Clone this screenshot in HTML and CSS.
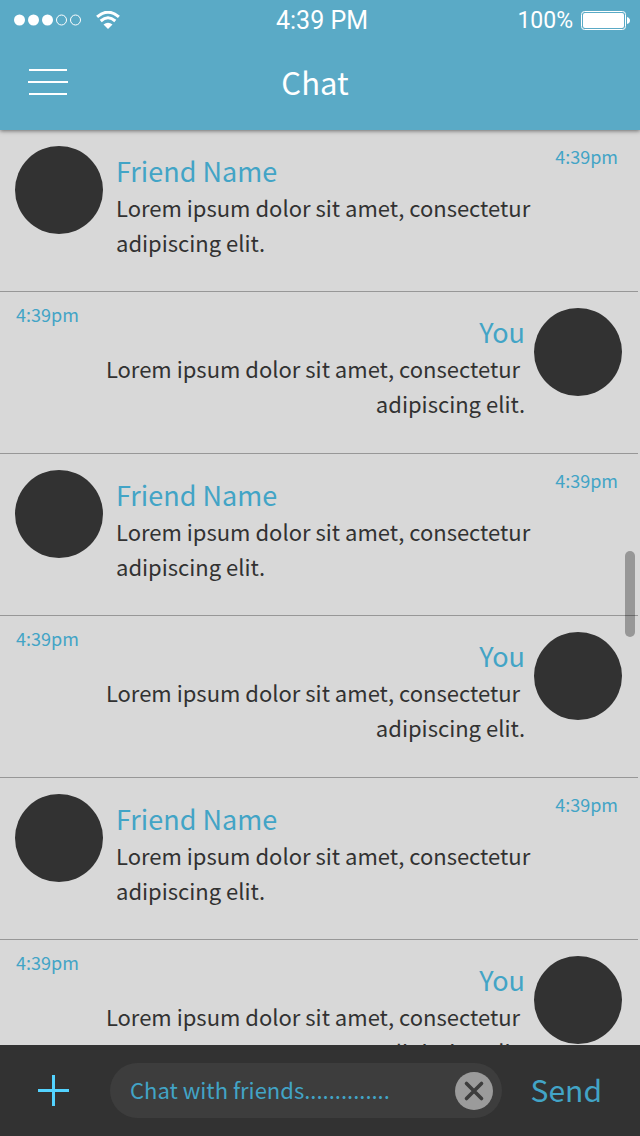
FILE: index.html
```
<!DOCTYPE html>
<html lang="en">
<head>
<meta charset="utf-8">
<meta name="viewport" content="width=device-width, initial-scale=1">
<title>Chat</title>
<link rel="stylesheet" href="styles.css">
</head>
<body class="app">
<header class="header">
  <div class="status">
    <div class="status-side">
      <svg class="signal" width="68" height="12" viewBox="0 0 68 12" fill="#fff" aria-hidden="true">
        <circle cx="5.5" cy="6" r="5.5"/><circle cx="19.5" cy="6" r="5.5"/><circle cx="33.5" cy="6" r="5.5"/>
        <circle cx="47.5" cy="6" r="5" fill="none" stroke="#fff"/><circle cx="61.5" cy="6" r="5" fill="none" stroke="#fff"/>
      </svg>
      <svg width="24" height="18" viewBox="0 0 24 18" fill="none" stroke="#fff" aria-hidden="true">
        <path d="M1.1 5.9Q12 -3.5 22.9 5.9" stroke-width="3"/>
        <path d="M4.7 10Q12 3.6 19.3 10" stroke-width="3"/>
        <path d="M7.500 13.500Q12 10 16.500 13.500L12 18Z" fill="#fff" stroke="none"/>
      </svg>
    </div>
    <span class="clock">4:39 PM</span>
    <div class="status-side status-end">
      <span class="percent">100%</span>
      <svg width="49" height="19" viewBox="0 0 49 19" aria-hidden="true">
        <rect x=".5" y=".5" width="44" height="18" rx="3" fill="none" stroke="#fff"/>
        <rect x="2" y="2" width="41" height="15" rx="2" fill="#fff"/>
        <path d="M46 6Q49 7 49 9.500T46 13Z" fill="#fff"/>
      </svg>
    </div>
  </div>
  <div class="titlebar">
    <button class="menu" type="button" aria-label="Menu">
      <svg width="40" height="26" viewBox="0 0 40 26" fill="#fff" aria-hidden="true"><path d="M1 0h38v2H1zM0 12h40v2H0zM1 24h38v2H1z"/></svg>
    </button>
    <h1 class="title">Chat</h1>
  </div>
</header>
<main class="chat">
  <article class="message">
    <div class="avatar"></div>
    <div class="content"><h2 class="name">Friend Name</h2><p class="text">Lorem ipsum dolor sit amet, consectetur<br>adipiscing elit.</p></div>
    <time class="time">4:39pm</time>
  </article>
  <article class="message own">
    <div class="avatar"></div>
    <div class="content"><h2 class="name">You</h2><p class="text">Lorem ipsum dolor sit amet, consectetur&nbsp;<br>adipiscing elit.</p></div>
    <time class="time">4:39pm</time>
  </article>
  <article class="message">
    <div class="avatar"></div>
    <div class="content"><h2 class="name">Friend Name</h2><p class="text">Lorem ipsum dolor sit amet, consectetur<br>adipiscing elit.</p></div>
    <time class="time">4:39pm</time>
  </article>
  <article class="message own">
    <div class="avatar"></div>
    <div class="content"><h2 class="name">You</h2><p class="text">Lorem ipsum dolor sit amet, consectetur&nbsp;<br>adipiscing elit.</p></div>
    <time class="time">4:39pm</time>
  </article>
  <article class="message">
    <div class="avatar"></div>
    <div class="content"><h2 class="name">Friend Name</h2><p class="text">Lorem ipsum dolor sit amet, consectetur<br>adipiscing elit.</p></div>
    <time class="time">4:39pm</time>
  </article>
  <article class="message own">
    <div class="avatar"></div>
    <div class="content"><h2 class="name">You</h2><p class="text">Lorem ipsum dolor sit amet, consectetur&nbsp;<br>adipiscing elit.</p></div>
    <time class="time">4:39pm</time>
  </article>
  <div class="thumb"></div>
</main>
<form class="composer">
  <button class="add" type="button" aria-label="Add attachment">
    <svg width="31" height="31" viewBox="0 0 31 31" fill="#53d3ff" aria-hidden="true"><path d="M14 0h3v14h14v3H17v14h-3V17H0v-3h14z"/></svg>
  </button>
  <div class="field">
    <input class="input" type="text" aria-label="Message" value="Chat with friends..............">
    <button class="clear" type="button" aria-label="Clear">
      <svg width="38" height="38" viewBox="0 0 38 38" aria-hidden="true"><circle cx="19" cy="19" r="19" fill="#9b9b9b"/><path d="M11.5 11.5l15 15M26.500 11.500l-15 15" stroke="#3d3d3d" stroke-width="3.6" stroke-linecap="round"/></svg>
    </button>
  </div>
  <button class="send" type="submit">Send</button>
</form>
</body>
</html>
```

FILE: styles.css
```
* { box-sizing: border-box; }

.app {
  margin: 0;
  height: 100vh;
  display: flex;
  flex-direction: column;
  background: #d8d8d8;
  color: #323232;
  font-family: "Noto Sans CJK SC", "Open Sans", sans-serif;
}

button {
  display: flex;
  padding: 0;
  border: 0;
  background: none;
  font: inherit;
  cursor: pointer;
}

.header {
  position: relative;
  z-index: 1;
  background: #5aaac6;
  color: #fff;
  box-shadow: 0 1px 4px rgba(0, 0, 0, 0.5);
}

.status {
  display: flex;
  align-items: center;
  height: 40px;
  padding: 0 10px 0 14px;
  font-family: Roboto, sans-serif;
  font-size: 25px;
  line-height: 40px;
}

.clock,
.percent { padding-top: 2px; }

.percent { font-size: 23px; }

.status-side {
  display: flex;
  flex: 1;
  align-items: center;
  gap: 14px;
}

.status-end {
  justify-content: flex-end;
  gap: 8px;
}

.titlebar {
  display: grid;
  grid-template-columns: 1fr auto 1fr;
  align-items: center;
  height: 90px;
  padding: 0 38px 6px 28px;
}

.title {
  margin: 0;
  font-size: 31px;
  font-weight: 400;
  line-height: 50px;
}

.chat {
  position: relative;
  flex: 1;
  min-height: 0;
  overflow: hidden;
}

.message {
  display: flex;
  min-height: 162px;
  margin-right: 2px;
  padding: 16px 20px 16px 15px;
  border-bottom: 1px solid #979797;
}

.own {
  flex-direction: row-reverse;
  padding: 16px;
  text-align: right;
}

.avatar {
  flex: none;
  width: 88px;
  height: 88px;
  border-radius: 50%;
  background: #323232;
}

.content {
  flex: 1;
  min-width: 0;
  padding: 5px 0 0 13px;
}

.own .content { padding: 4px 9px 0 0; }

.name {
  margin: 0;
  color: #42a4c6;
  font-size: 27px;
  font-weight: 400;
  line-height: 39px;
}

.text {
  margin: 0;
  font-size: 22px;
  line-height: 35px;
}

.time {
  flex: none;
  color: #42a4c6;
  font-size: 18px;
  line-height: 20px;
}

.own .time {
  margin-top: -4px;
  text-align: left;
}

.thumb {
  position: absolute;
  top: 46%;
  right: 5px;
  width: 10px;
  height: 86px;
  border-radius: 5px;
  background: rgba(0, 0, 0, 0.3);
}

.composer {
  display: flex;
  align-items: center;
  height: 91px;
  margin: 0;
  padding: 0 38px;
  background: #323232;
}

.field {
  display: flex;
  flex: 1;
  align-items: center;
  min-width: 0;
  height: 55px;
  margin: 0 29px 0 41px;
  padding: 0 9px 0 20px;
  border-radius: 28px;
  background: #3d3d3d;
}

.input {
  flex: 1;
  min-width: 0;
  padding: 0 0 4px;
  border: 0;
  outline: 0;
  background: none;
  color: #42a4c6;
  font: inherit;
  font-size: 22px;
  line-height: 36px;
}

.send {
  padding-bottom: 4px;
  color: #42a4c6;
  font-size: 30px;
  line-height: 48px;
}
```
